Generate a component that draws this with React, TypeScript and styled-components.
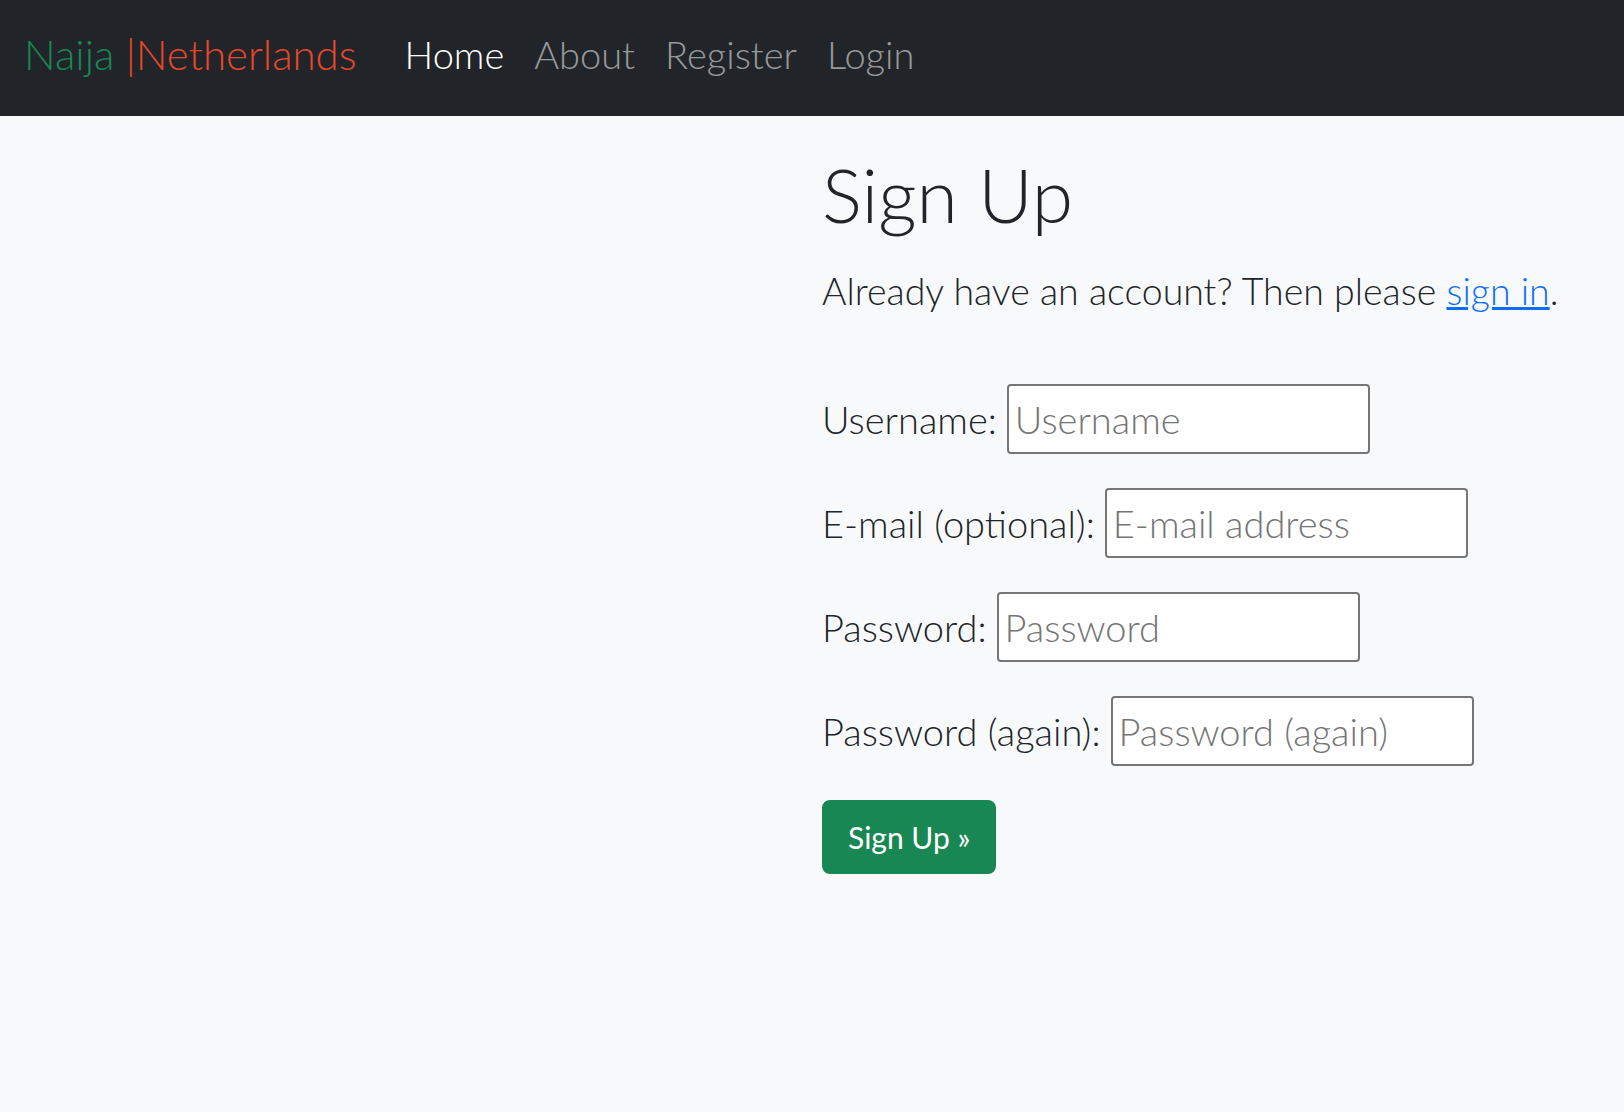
import React from "react";
import styled, { createGlobalStyle } from "styled-components";

const FONT = `"Lato", "Noto Sans", "Liberation Sans", sans-serif`;

const GlobalStyle = createGlobalStyle`
  html, body {
    margin: 0;
    padding: 0;
    background: #f8f9fa;
  }
  body {
    font-family: ${FONT};
    font-weight: 300;
    color: #212529;
  }
  * { box-sizing: border-box; }
`;

const Navbar = styled.nav`
  height: 116px;
  background: #212529;
  display: flex;
  align-items: center;
  padding: 0 24px 8px;
`;

const Brand = styled.a`
  font-size: 42px;
  font-weight: 300;
  text-decoration: none;
  margin-right: 33px;
  white-space: nowrap;
`;

const BrandPart = styled.span<{ $color: string }>`
  color: ${(p) => p.$color};
`;

const NavList = styled.ul`
  display: flex;
  list-style: none;
  margin: 0;
  padding: 0;
`;

const NavLink = styled.a<{ $active?: boolean }>`
  display: block;
  padding: 0 15px;
  font-size: 38px;
  font-weight: 300;
  text-decoration: none;
  color: ${(p) => (p.$active ? "#ffffff" : "rgba(255,255,255,0.55)")};
`;

const Main = styled.main`
  display: grid;
  grid-template-columns: 1fr 1fr;
  column-gap: 20px;
`;

const Content = styled.section`
  grid-column: 2;
  padding-top: 33px;
`;

const Title = styled.h1`
  font-size: 75px;
  font-weight: 300;
  line-height: 1.2;
  margin: 0 0 24px;
`;

const Lead = styled.p`
  font-size: 37.5px;
  font-weight: 300;
  line-height: 1.5;
  margin: 0 0 65px;
`;

const Link = styled.a`
  color: #0d6efd;
  text-decoration: underline;
`;

const Form = styled.form`
  display: flex;
  flex-direction: column;
  align-items: flex-start;
  gap: 34px;
`;

const Row = styled.div`
  display: flex;
  align-items: center;
  gap: 10px;
`;

const Label = styled.label`
  font-size: 38px;
  font-weight: 300;
  white-space: nowrap;
`;

const Input = styled.input`
  width: 363px;
  height: 70px;
  border: 2px solid #767676;
  border-radius: 4px;
  background: #fff;
  padding: 0 6px;
  font-family: ${FONT};
  font-size: 38px;
  font-weight: 300;
  color: #212529;
  outline: none;
  &::placeholder {
    color: #757575;
  }
`;

const Button = styled.button`
  height: 74px;
  padding: 0 24px;
  border: 2px solid #198754;
  border-radius: 8px;
  background: #198754;
  color: #fff;
  font-family: ${FONT};
  font-size: 30px;
  font-weight: 400;
  cursor: pointer;
`;

const fields = [
  { id: "username", label: "Username:", placeholder: "Username", type: "text" },
  { id: "email", label: "E-mail (optional):", placeholder: "E-mail address", type: "email" },
  { id: "password1", label: "Password:", placeholder: "Password", type: "password" },
  { id: "password2", label: "Password (again):", placeholder: "Password (again)", type: "password" },
];

export default function App() {
  return (
    <>
      <GlobalStyle />
      <Navbar>
        <Brand href="#">
          <BrandPart $color="#198754">Naija </BrandPart>
          <BrandPart $color="#e8472b">|Netherlands</BrandPart>
        </Brand>
        <NavList>
          <li><NavLink href="#" $active>Home</NavLink></li>
          <li><NavLink href="#">About</NavLink></li>
          <li><NavLink href="#">Register</NavLink></li>
          <li><NavLink href="#">Login</NavLink></li>
        </NavList>
      </Navbar>
      <Main>
        <Content>
          <Title>Sign Up</Title>
          <Lead>
            Already have an account? Then please <Link href="#">sign in</Link>.
          </Lead>
          <Form onSubmit={(e) => e.preventDefault()}>
            {fields.map((f) => (
              <Row key={f.id}>
                <Label htmlFor={f.id}>{f.label}</Label>
                <Input id={f.id} type={f.type} placeholder={f.placeholder} />
              </Row>
            ))}
            <Button type="submit">Sign Up »</Button>
          </Form>
        </Content>
      </Main>
    </>
  );
}
